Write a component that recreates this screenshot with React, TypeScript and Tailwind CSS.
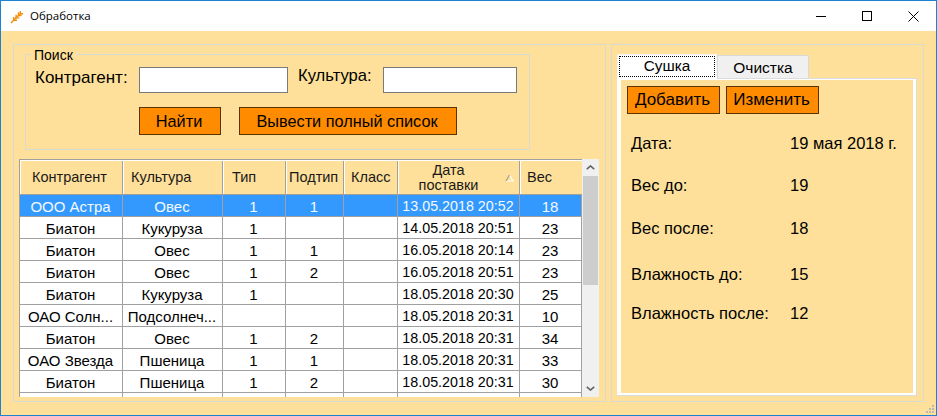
const COLS = ['w-[103px]', 'w-[100px]', 'w-[63px]', 'w-[58px]', 'w-[54px]', 'w-[122px]', 'w-[62px]'];

const HEADERS = ['Контрагент', 'Культура', 'Тип', 'Подтип', 'Класс', 'Дата поставки', 'Вес'];

const ROWS = [
  ['ООО Астра', 'Овес', '1', '1', '', '13.05.2018 20:52', '18'],
  ['Биатон', 'Кукуруза', '1', '', '', '14.05.2018 20:51', '23'],
  ['Биатон', 'Овес', '1', '1', '', '16.05.2018 20:14', '23'],
  ['Биатон', 'Овес', '1', '2', '', '16.05.2018 20:51', '23'],
  ['Биатон', 'Кукуруза', '1', '', '', '18.05.2018 20:30', '25'],
  ['ОАО Солн...', 'Подсолнеч...', '', '', '', '18.05.2018 20:31', '10'],
  ['Биатон', 'Овес', '1', '2', '', '18.05.2018 20:31', '34'],
  ['ОАО Звезда', 'Пшеница', '1', '1', '', '18.05.2018 20:31', '33'],
  ['Биатон', 'Пшеница', '1', '2', '', '18.05.2018 20:31', '30'],
  ['', '', '', '', '', '', ''],
];

const DETAILS = [
  { label: 'Дата:', value: '19 мая 2018 г.', margin: 'mt-[19px]' },
  { label: 'Вес до:', value: '19', margin: 'mt-[22px]' },
  { label: 'Вес после:', value: '18', margin: 'mt-[23px]' },
  { label: 'Влажность до:', value: '15', margin: 'mt-[26px]' },
  { label: 'Влажность после:', value: '12', margin: 'mt-[19px]' },
];

function OrangeButton({ label, className }: { label: string; className: string }) {
  return (
    <button className={`h-[28px] border border-[#5a3200] bg-[#ff8c00] pr-[2px] text-black ${className}`}>
      {label}
    </button>
  );
}

function DataGrid() {
  return (
    <div className="flex h-[238px] w-[580px] overflow-hidden">
      <div className="w-[563px] shrink-0 overflow-hidden">
        {/* Header */}
        <div className="h-[36px] border border-[#a0a0a0] border-r-0 bg-[#ffe09a] text-[14.5px] text-[#1a1a1a]">
          <div className="flex h-full border-l border-t border-white">
            {HEADERS.map((h, i) => (
              <div
                key={h}
                className={`${COLS[i]} relative flex shrink-0 items-center border-r border-[#a0a0a0] ${i === 0 ? '-ml-px' : ''} ${i === 5 ? 'justify-center' : ''} ${i === 6 ? 'border-r-0' : ''}`}
              >
                {i > 0 && <span className="absolute left-0 top-0 h-full w-px bg-white" />}
                {i === 5 ? (
                  <>
                    <span className="w-[90px] pr-[20px] text-center leading-[15px]">{h}</span>
                    <svg className="absolute right-[5px] top-[13px] h-[8px] w-[9px]" viewBox="0 0 9 8">
                      <path d="M4.5 1 8 7H1" fill="none" stroke="#ffffff" strokeWidth="1.2" />
                      <path d="M4.5 1 1 7" fill="none" stroke="#a89f80" strokeWidth="1.2" />
                    </svg>
                  </>
                ) : (
                  <span className={i === 0 ? 'pl-[12px]' : i === 1 ? 'pl-[8px]' : i === 2 ? 'pl-[9px]' : i === 3 ? 'pl-[3px]' : 'pl-[7px]'}>{h}</span>
                )}
              </div>
            ))}
          </div>
        </div>
        {/* Rows */}
        {ROWS.map((row, r) => (
          <div
            key={r}
            className={`flex h-[22px] border-b border-l border-[#a0a0a0] text-[15px] ${r === 0 ? 'bg-[#3399ff] text-[#f4f9ff]' : 'bg-white text-black'}`}
          >
            {row.map((cell, c) => (
              <div
                key={c}
                className={`${COLS[c]} flex shrink-0 items-center justify-center overflow-hidden whitespace-nowrap border-r border-[#a0a0a0] pr-px pt-[3px] ${c === 5 ? 'text-[14.3px]' : ''}`}
              >
                {cell}
              </div>
            ))}
          </div>
        ))}
      </div>
      {/* Scrollbar */}
      <div className="flex w-[17px] shrink-0 flex-col bg-[#f0f0f0]">
        <div className="flex h-[17px] items-center justify-center">
          <svg className="h-[5px] w-[9px]" viewBox="0 0 9 5">
            <path d="M.8 4.2 4.5 1l3.7 3.2" fill="none" stroke="#606060" strokeWidth="1.6" />
          </svg>
        </div>
        <div className="mx-px h-[109px] bg-[#cdcdcd]" />
        <div className="flex-1" />
        <div className="flex h-[17px] items-center justify-center">
          <svg className="h-[5px] w-[9px]" viewBox="0 0 9 5">
            <path d="M.8.8 4.5 4l3.7-3.2" fill="none" stroke="#606060" strokeWidth="1.6" />
          </svg>
        </div>
      </div>
    </div>
  );
}

export default function App() {
  return (
    <div className="flex h-[416px] w-[937px] flex-col overflow-hidden border border-[#1e82d2] bg-[#ffe09a] font-['Liberation_Sans',sans-serif]">
      {/* Title bar */}
      <div className="flex h-[30px] shrink-0 items-center bg-white">
        <svg className="ml-[9px] h-[15px] w-[15px]" viewBox="0 0 16 16" fill="none" stroke="#f0900f" strokeWidth="1.5">
          <path d="M1 15 11.5 4.5" />
          <path d="M4 12V8.5M4 12h3.5M6.5 9.5V6M6.5 9.5H10M9 7V3.5M9 7h3.5M11 5V2M11 5h3" />
        </svg>
        <span className="ml-[5px] font-['Open_Sans',sans-serif] text-[11.5px] text-black">Обработка</span>
        <div className="ml-auto flex h-full">
          <div className="flex w-[46px] items-center justify-center">
            <span className="h-px w-[10px] bg-black" />
          </div>
          <div className="flex w-[46px] items-center justify-center">
            <span className="h-[10px] w-[10px] border border-black" />
          </div>
          <div className="flex w-[46px] items-center justify-center">
            <svg className="h-[11px] w-[11px]" viewBox="0 0 11 11">
              <path d="M.5.5l10 10M10.5.5l-10 10" stroke="#000" strokeWidth="1" fill="none" />
            </svg>
          </div>
        </div>
      </div>

      {/* Body */}
      <div className="relative flex flex-1 gap-[5px] pl-[12px] pt-[13px]">
        {/* Left panel */}
        <div className="h-[358px] w-[593px] border border-[#d8dad6] pl-[5px] pt-[9px]">
          <div className="relative ml-[6px] h-[96px] w-[505px] border border-[#d8dad6] pt-[12px]">
            <span className="absolute -top-[8px] left-[5px] bg-[#ffe09a] px-[3px] text-[14px] leading-[16px] text-black">Поиск</span>
            <div className="flex items-start">
              <span className="ml-[9px] w-[104px] text-[17px] leading-[22px] text-black">Контрагент:</span>
              <input className="h-[26px] w-[149px] border border-[#7a7a7a] bg-white" />
              <span className="ml-[10px] w-[85px] text-[16.6px] leading-[18px] text-black">Культура:</span>
              <input className="h-[26px] w-[134px] border border-[#7a7a7a] bg-white" />
            </div>
            <div className="ml-[113px] mt-[14px] flex gap-[18px] text-[16.3px]">
              <OrangeButton label="Найти" className="w-[82px]" />
              <OrangeButton label="Вывести полный список" className="w-[218px]" />
            </div>
          </div>
          <div className="mt-[9px]">
            <DataGrid />
          </div>
        </div>

        {/* Right panel */}
        <div className="h-[358px] w-[313px] border border-[#d8dad6] pl-[5px] pt-[9px]">
          <div className="flex h-[24px] items-end">
            <div className="relative z-10 -mb-px flex h-[25px] w-[100px] items-center justify-center border-x border-t border-[#f4f4f4] bg-white pb-[2px] text-[15.3px] text-black outline-1 -outline-offset-3 outline-dotted outline-black">
              Сушка
            </div>
            <div className="flex h-[23px] w-[92px] items-center justify-center border border-b-0 border-[#d9d9d9] bg-[#f0f0f0] pt-px text-[15.5px] text-black">
              Очистка
            </div>
          </div>
          <div className="h-[318px] w-[300px] border-y border-r border-[#dcdcdc] bg-[#ffe09a]">
            <div className="h-full w-full border-b-2 border-l-4 border-r-[3px] border-t border-white px-[6px] pt-[6px]">
              <div className="flex gap-[6px] text-[17px]">
                <OrangeButton label="Добавить" className="w-[93px]" />
                <OrangeButton label="Изменить" className="w-[93px]" />
              </div>
              {DETAILS.map((d) => (
                <div key={d.label} className={`${d.margin} flex text-[16.5px] leading-[20px] text-black`}>
                  <span className="ml-[4px] w-[159px] shrink-0">{d.label}</span>
                  <span>{d.value}</span>
                </div>
              ))}
            </div>
          </div>
        </div>

        {/* Resize grip */}
        <svg className="absolute bottom-px right-px h-[10px] w-[10px]" viewBox="0 0 10 10" fill="#b8b8b8">
          <rect x="7" y="1" width="2" height="2" />
          <rect x="4" y="4" width="2" height="2" />
          <rect x="7" y="4" width="2" height="2" />
          <rect x="1" y="7" width="2" height="2" />
          <rect x="4" y="7" width="2" height="2" />
          <rect x="7" y="7" width="2" height="2" />
        </svg>
      </div>
    </div>
  );
}
